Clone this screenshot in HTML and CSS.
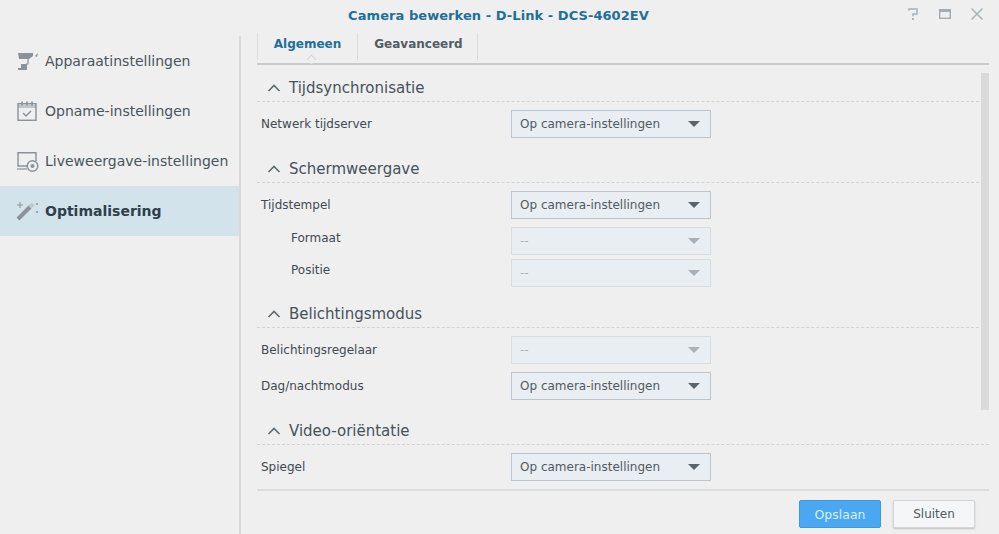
FILE: index.html
```html
<!DOCTYPE html>
<html lang="nl">
<head>
<meta charset="utf-8">
<title>Camera bewerken</title>
<link rel="stylesheet" href="styles.css">
</head>
<body>
<div class="window">
  <header class="titlebar">
    <div class="title">Camera bewerken - D-Link - DCS-4602EV</div>
    <div class="winbtns">
      <svg width="14" height="14" viewBox="0 0 14 14"><path d="M3 3.5V2h8v5H7v2.2" fill="none" stroke="#a9b2b8" stroke-width="1.6"/><rect x="6" y="11" width="2" height="2" fill="#a9b2b8"/></svg>
      <svg width="14" height="14" viewBox="0 0 14 14"><rect x="1.7" y="2.7" width="10.6" height="8.6" fill="none" stroke="#a3adb3" stroke-width="1.4"/><rect x="1" y="2" width="12" height="3" fill="#a3adb3"/></svg>
      <svg width="14" height="14" viewBox="0 0 14 14"><path d="M1.5 1.5l11 11M12.5 1.5l-11 11" fill="none" stroke="#a9b2b8" stroke-width="1.5"/></svg>
    </div>
  </header>
  <div class="main">
    <nav class="sidebar">
      <div class="navitem">
        <svg class="navicon" width="24" height="24" viewBox="0 0 24 24"><path d="M3 4h15v3l-4 3H4z" fill="#8b9299"/><path d="M20 7l3-3-1 4z" fill="#8b9299"/><path d="M6 15h6v6H3v-2h3z" fill="#8b9299"/><path d="M13 10v5h-2" fill="none" stroke="#8b9299" stroke-width="1.2"/></svg>
        <span>Apparaatinstellingen</span>
      </div>
      <div class="navitem">
        <svg class="navicon" width="24" height="24" viewBox="0 0 24 24"><rect x="3" y="4.7" width="18" height="16.6" fill="none" stroke="#8b9299" stroke-width="1.4"/><path d="M3 6h18v3H3z" fill="#8b9299" opacity=".45"/><path d="M7 2.5v4M12 2.5v4M17 2.5v4" stroke="#8b9299" stroke-width="1.6"/><path d="M8 14l3 3 5-5" fill="none" stroke="#8b9299" stroke-width="1.5"/></svg>
        <span>Opname-instellingen</span>
      </div>
      <div class="navitem">
        <svg class="navicon" width="24" height="24" viewBox="0 0 24 24"><path d="M13 17H3V3.7h18V12" fill="none" stroke="#8b9299" stroke-width="1.4"/><path d="M2 20h10" stroke="#8b9299" stroke-width="1.2"/><circle cx="17.5" cy="17" r="5.3" fill="none" stroke="#8b9299" stroke-width="1.5"/><circle cx="17.5" cy="17" r="2" fill="#8b9299"/></svg>
        <span>Liveweergave-instellingen</span>
      </div>
      <div class="navitem active">
        <svg class="navicon" width="24" height="24" viewBox="0 0 24 24"><path d="M3 20L15 8" stroke="#8b9299" stroke-width="4"/><path d="M15 8l3-3" stroke="#c2c8cc" stroke-width="4"/><path d="M5 3v6M2 6h6" stroke="#8b9299" stroke-width="1"/><circle cx="22" cy="5" r="1" fill="#8b9299"/><circle cx="22" cy="13" r="1" fill="#8b9299"/></svg>
        <span>Optimalisering</span>
      </div>
    </nav>
    <div class="content">
      <div class="tabs">
        <div class="tab current">Algemeen</div>
        <div class="tab">Geavanceerd</div>
      </div>
      <div class="panel">
        <div class="scrollarea">
          <section class="group first">
            <h2 class="grouphead"><svg width="14" height="8" viewBox="0 0 14 8"><path d="M1.5 7L7 1.5 12.5 7" fill="none" stroke="#5f6a72" stroke-width="1.6"/></svg>Tijdsynchronisatie</h2>
            <div class="row"><label>Netwerk tijdserver</label><div class="select"><span>Op camera-instellingen</span><i class="caret"></i></div></div>
          </section>
          <section class="group">
            <h2 class="grouphead"><svg width="14" height="8" viewBox="0 0 14 8"><path d="M1.5 7L7 1.5 12.5 7" fill="none" stroke="#5f6a72" stroke-width="1.6"/></svg>Schermweergave</h2>
            <div class="row"><label>Tijdstempel</label><div class="select"><span>Op camera-instellingen</span><i class="caret"></i></div></div>
            <div class="row sub"><label>Formaat</label><div class="select off"><span>--</span><i class="caret"></i></div></div>
            <div class="row sub tight"><label>Positie</label><div class="select off"><span>--</span><i class="caret"></i></div></div>
          </section>
          <section class="group aftersub">
            <h2 class="grouphead"><svg width="14" height="8" viewBox="0 0 14 8"><path d="M1.5 7L7 1.5 12.5 7" fill="none" stroke="#5f6a72" stroke-width="1.6"/></svg>Belichtingsmodus</h2>
            <div class="row"><label>Belichtingsregelaar</label><div class="select off"><span>--</span><i class="caret"></i></div></div>
            <div class="row"><label>Dag/nachtmodus</label><div class="select"><span>Op camera-instellingen</span><i class="caret"></i></div></div>
          </section>
          <section class="group">
            <h2 class="grouphead"><svg width="14" height="8" viewBox="0 0 14 8"><path d="M1.5 7L7 1.5 12.5 7" fill="none" stroke="#5f6a72" stroke-width="1.6"/></svg>Video-oriëntatie</h2>
            <div class="row"><label>Spiegel</label><div class="select"><span>Op camera-instellingen</span><i class="caret"></i></div></div>
          </section>
        </div>
        <div class="scrollbar"><div class="thumb"></div></div>
      </div>
      <footer class="footer">
        <button class="btn primary">Opslaan</button>
        <button class="btn">Sluiten</button>
      </footer>
    </div>
  </div>
</div>
</body>
</html>
```
FILE: styles.css
```css
* { box-sizing: border-box; }
html, body { margin: 0; padding: 0; }
body { width: 999px; height: 534px; overflow: hidden; background: #efefef; font-family: "DejaVu Sans", sans-serif; color: #3f4a52; }
.window { display: flex; flex-direction: column; height: 534px; }
.titlebar { height: 36px; flex: none; display: flex; align-items: center; justify-content: center; position: relative; }
.title { font-size: 13px; font-weight: bold; color: #1f6f99; letter-spacing: .06px; margin: -6px 2px 0 0; }
.winbtns { position: absolute; top: 7px; right: 15px; display: flex; gap: 18px; }
.main { flex: 1; display: flex; min-height: 0; }
.sidebar { width: 241px; flex: none; border-right: 2px solid #d9d9d9; }
.navitem { height: 50px; display: flex; align-items: center; padding-left: 15px; gap: 6px; font-size: 14px; color: #4a545b; }
.navitem.active { background: #d3e3ec; font-weight: bold; color: #2f3f4b; width: 239px; }
.navicon { flex: none; }
.content { flex: 1; display: flex; flex-direction: column; padding-left: 16px; min-width: 0; }
.tabs { margin-right: 10px; display: flex; border-bottom: 2px solid #c9cccd; flex: none; margin-top: -3px; height: 32px; position: relative; }
.tabs::after { content: ""; position: absolute; left: 50px; bottom: -1px; width: 8px; height: 8px; background: #efefef; border-left: 1px solid #c9cccd; border-top: 1px solid #c9cccd; transform: rotate(45deg) scale(.75); }
.tab { height: 27px; font-size: 12px; font-weight: bold; color: #535c63; display: flex; align-items: center; justify-content: center; border-right: 1px solid #dcdcdc; padding: 0 0 6px; }
.tab.current { color: #1f6f99; border-left: 1px solid #dcdcdc; width: 101px; }
.tab:not(.current) { width: 120px; padding-left: 2px; }
.panel { position: relative; margin-right: 10px; border-bottom: 2px solid #dcdcdc; height: 426px; flex: none; }
.scrollarea { padding-top: 9px; }
.group { margin-top: 17px; }
.group.first { margin-top: 0; }
.group.aftersub { margin-top: 13px; }
.grouphead { margin: 0; height: 28px; border-bottom: 1px dashed #d4d4d4; font-size: 15px; font-weight: normal; color: #47525a; display: flex; align-items: center; padding-left: 10px; gap: 8px; }
.row { display: flex; align-items: center; height: 28px; margin-top: 8px; padding-left: 4px; font-size: 12px; color: #3f4a52; }
.row label { width: 250px; flex: none; }
.row.sub { padding-left: 34px; }
.row.sub label { width: 220px; position: relative; top: -3px; }
.row.tight { margin-top: 4px; }
.select { width: 200px; height: 28px; background: #e9eef2; border: 1px solid #bcc5cc; display: flex; align-items: center; justify-content: space-between; padding: 0 10px 0 8px; font-size: 12px; color: #505a62; }
.select.off { background: #e9eef2; border-color: #d8dde0; color: #aab2b8; }
.caret { width: 0; height: 0; border-left: 6px solid transparent; border-right: 6px solid transparent; border-top: 6px solid #5a646c; }
.select.off .caret { border-top-color: #aab2b8; }
.scrollbar { position: absolute; top: 8px; right: 0; width: 8px; height: 337px; }
.thumb { height: 100%; background: #dadada; }
.footer { flex: 1; display: flex; justify-content: flex-end; align-items: flex-start; gap: 12px; padding: 9px 24px 0 0; }
.btn { width: 82px; height: 28px; font: 12px "DejaVu Sans", sans-serif; border-radius: 2px; border: 1px solid #d3d6d8; background: #f4f6f8; color: #505a62; box-shadow: 0 1px 2px rgba(0,0,0,.2); padding: 0; }
.btn.primary { background: #4aa8f2; border-color: #3f98de; color: #d8f0ff; font-size: 12.5px; box-shadow: none; }
```
